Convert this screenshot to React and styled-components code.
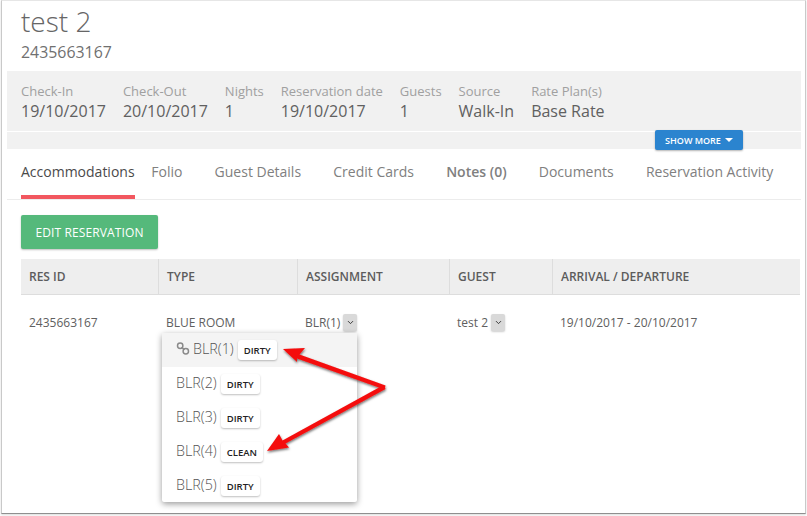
import styled, { createGlobalStyle } from "styled-components";
import { ChevronDown } from "lucide-react";

const Global = createGlobalStyle`
  html, body {
    margin: 0;
    padding: 0;
    background: #fff;
  }
  body {
    font-family: "Open Sans", "Liberation Sans", sans-serif;
    color: #555;
    overflow: hidden;
  }
`;

const summary = [
  { label: "Check-In", value: "19/10/2017" },
  { label: "Check-Out", value: "20/10/2017" },
  { label: "Nights", value: "1" },
  { label: "Reservation date", value: "19/10/2017" },
  { label: "Guests", value: "1" },
  { label: "Source", value: "Walk-In" },
  { label: "Rate Plan(s)", value: "Base Rate" },
];

const tabs = ["Accommodations", "Folio", "Guest Details", "Credit Cards", "Notes (0)", "Documents", "Reservation Activity"];

const rooms = [
  { name: "BLR(1)", status: "DIRTY", current: true },
  { name: "BLR(2)", status: "DIRTY" },
  { name: "BLR(3)", status: "DIRTY" },
  { name: "BLR(4)", status: "CLEAN" },
  { name: "BLR(5)", status: "DIRTY" },
];

const ChainIcon = () => (
  <ChainSvg viewBox="0 0 14 13" fill="none" stroke="#8a8a8a" strokeWidth="1.5">
    <circle cx="4.2" cy="3.8" r="2.7" />
    <circle cx="9.8" cy="9.2" r="2.7" />
    <path d="M5.6 5.2 L8.4 7.8" />
  </ChainSvg>
);

const App = () => {
  return (
    <Screen>
      <Global />
      <Frame>
        <Header>
          <Name>test 2</Name>
          <ResNumber>2435663167</ResNumber>
        </Header>
        <Summary>
          <SummaryRow>
            {summary.map((item) => (
              <SummaryItem key={item.label}>
                <SummaryLabel>{item.label}</SummaryLabel>
                <SummaryValue>{item.value}</SummaryValue>
              </SummaryItem>
            ))}
          </SummaryRow>
          <SummaryFooter>
            <ShowMore>
              SHOW MORE <Caret />
            </ShowMore>
          </SummaryFooter>
        </Summary>
        <Tabs>
          {tabs.map((tab, i) => (
            <Tab key={tab} $active={i === 0} $bold={tab.startsWith("Notes")}>
              {tab}
            </Tab>
          ))}
        </Tabs>
        <Body>
          <EditButton>EDIT RESERVATION</EditButton>
          <TableHead>
            <HeadCell>RES ID</HeadCell>
            <HeadCell>TYPE</HeadCell>
            <HeadCell>ASSIGNMENT</HeadCell>
            <HeadCell>GUEST</HeadCell>
            <HeadCell>ARRIVAL / DEPARTURE</HeadCell>
          </TableHead>
          <TableRow>
            <Cell>2435663167</Cell>
            <Cell>BLUE ROOM</Cell>
            <Cell>
              BLR(1)
              <SelectToggle>
                <ChevronDown size={9} strokeWidth={2.5} />
              </SelectToggle>
              <Menu>
                {rooms.map((room) => (
                  <MenuItem key={room.name} $current={room.current}>
                    {room.current && <ChainIcon />}
                    <RoomName>{room.name}</RoomName>
                    <StatusBadge>{room.status}</StatusBadge>
                  </MenuItem>
                ))}
              </Menu>
            </Cell>
            <Cell>
              test 2
              <SelectToggle>
                <ChevronDown size={9} strokeWidth={2.5} />
              </SelectToggle>
            </Cell>
            <Cell>19/10/2017 - 20/10/2017</Cell>
          </TableRow>
        </Body>
      </Frame>
      <Arrows viewBox="0 0 807 516">
        <defs>
          <filter id="arrowShadow" x="-20%" y="-20%" width="140%" height="140%">
            <feDropShadow dx="0.5" dy="1.5" stdDeviation="1.2" floodColor="#000" floodOpacity="0.55" />
          </filter>
        </defs>
        <g filter="url(#arrowShadow)" fill="#f40d0d">
          <path d="M283 349 L305 348 L299.5 354.5 L385.5 385.5 L384.5 389.5 L297 358.5 L297 362 Z" />
          <path d="M267 451 L279 434 L282.5 440.5 L383.5 385 L385.5 389 L285.5 443.5 L289 447.5 Z" />
        </g>
      </Arrows>
    </Screen>
  );
};

const Screen = styled.div`
  position: relative;
  width: 807px;
  height: 516px;
  overflow: hidden;
`;

const Frame = styled.div`
  box-sizing: border-box;
  width: 805px;
  height: 514px;
  margin-left: 1px;
  padding: 0 0 0 5px;
  border: 1px solid #c9c9c9;
  border-bottom: 1px solid #8f8f8f;
  border-top-color: #e6e6e6;
  box-shadow: 0 1px 2px rgba(0, 0, 0, 0.15);
  overflow: hidden;
`;

const Header = styled.div`
  box-sizing: border-box;
  height: 70px;
  padding-left: 14px;
`;

const Name = styled.div`
  font-size: 28px;
  font-weight: 300;
  line-height: 40px;
  color: #666;
`;

const ResNumber = styled.div`
  font-size: 15.9px;
  line-height: 20px;
  margin-top: 1px;
  color: #707070;
`;

const Summary = styled.div`
  width: 794px;
  background: #f1f1f1;
`;

const SummaryRow = styled.div`
  box-sizing: border-box;
  display: flex;
  gap: 17px;
  height: 61px;
  padding: 11px 0 0 14px;
  border-bottom: 1px solid #fff;
`;

const SummaryItem = styled.div`
  display: flex;
  flex-direction: column;
`;

const SummaryLabel = styled.span`
  font-size: 13px;
  line-height: 18px;
  color: #a0a0a0;
`;

const SummaryValue = styled.span`
  font-size: 16px;
  line-height: 22px;
  color: #606060;
`;

const SummaryFooter = styled.div`
  position: relative;
  height: 17px;
`;

const ShowMore = styled.button`
  position: absolute;
  top: -2px;
  left: 648px;
  display: flex;
  align-items: center;
  justify-content: center;
  gap: 4px;
  width: 88px;
  height: 20px;
  padding: 0;
  border: 0;
  border-radius: 2px;
  background: #2b84cf;
  box-shadow: 0 1px 2px rgba(0, 0, 0, 0.3);
  color: #fff;
  font-family: inherit;
  font-size: 9px;
  font-weight: 600;
`;

const Caret = styled.i`
  width: 0;
  height: 0;
  border-left: 4px solid transparent;
  border-right: 4px solid transparent;
  border-top: 4px solid #fff;
`;

const Tabs = styled.div`
  box-sizing: border-box;
  display: flex;
  gap: 32.2px;
  width: 794px;
  height: 51px;
  padding-left: 14px;
  border-bottom: 1px solid #ececec;
`;

const Tab = styled.div`
  box-sizing: border-box;
  height: 50px;
  padding-top: 13px;
  font-size: 14px;
  line-height: 20px;
  white-space: nowrap;
  font-weight: ${(p) => (p.$bold ? 600 : 400)};
  color: ${(p) => (p.$active ? "#4a4a4a" : "#808080")};
  border-bottom: 4px solid ${(p) => (p.$active ? "#f2575f" : "transparent")};
  margin-right: ${(p) => (p.$active ? "-15.5px" : "0")};
`;

const Body = styled.div`
  padding: 15px 0 0 14px;
  width: 779px;
`;

const EditButton = styled.button`
  display: block;
  width: 137px;
  height: 34px;
  padding: 0;
  border: 0;
  border-radius: 2px;
  background: #55b97b;
  box-shadow: 0 1px 2px rgba(0, 0, 0, 0.25);
  color: #fff;
  font-family: inherit;
  font-size: 12px;
  font-weight: 500;
  letter-spacing: 0.12px;
`;

const columns = "137px 139px 152px 103px 1fr";

const TableHead = styled.div`
  display: grid;
  grid-template-columns: ${columns};
  height: 36px;
  margin-top: 10px;
  background: #eeeeee;
  border-bottom: 1px solid #ddd;
  box-sizing: border-box;
`;

const HeadCell = styled.div`
  padding: 0 8px;
  font-size: 12px;
  font-weight: 600;
  line-height: 35px;
  color: #5c5c5c;
  & + & {
    border-left: 1px solid #ddd;
  }
`;

const TableRow = styled.div`
  display: grid;
  grid-template-columns: ${columns};
  padding-top: 18px;
`;

const Cell = styled.div`
  position: relative;
  display: flex;
  align-items: center;
  height: 18px;
  padding: 0 8px;
  font-size: 12px;
  color: #606060;
  white-space: nowrap;
`;

const SelectToggle = styled.span`
  display: inline-flex;
  align-items: center;
  justify-content: center;
  width: 14px;
  height: 17px;
  margin-left: 3px;
  border-radius: 2px;
  background: #d9d9d9;
  box-shadow: 0 1px 2px rgba(0, 0, 0, 0.2);
  color: #333;
`;

const Menu = styled.div`
  position: absolute;
  top: 20px;
  left: -135px;
  width: 195px;
  height: 169px;
  background: #fff;
  border-radius: 2px;
  box-shadow: 0 2px 6px rgba(0, 0, 0, 0.4);
  z-index: 2;
`;

const MenuItem = styled.div`
  box-sizing: border-box;
  display: flex;
  align-items: center;
  height: 34px;
  padding-left: 14px;
  background: ${(p) => (p.$current ? "#f4f4f4" : "transparent")};
`;

const ChainSvg = styled.svg`
  width: 14px;
  height: 13px;
  margin: -3px 3px 0 0;
`;

const RoomName = styled.span`
  font-size: 14.3px;
  font-weight: 300;
  color: #555;
  margin-top: -3px;
`;

const StatusBadge = styled.span`
  display: inline-flex;
  align-items: center;
  height: 20px;
  margin-left: 4px;
  padding: 0 6px;
  border-radius: 3px;
  background: #fff;
  box-shadow: 0 1px 2px rgba(0, 0, 0, 0.25);
  color: #222;
  font-size: 9.5px;
  font-weight: 600;
`;

const Arrows = styled.svg`
  position: absolute;
  inset: 0;
  width: 807px;
  height: 516px;
  pointer-events: none;
  z-index: 3;
`;

export default App;
